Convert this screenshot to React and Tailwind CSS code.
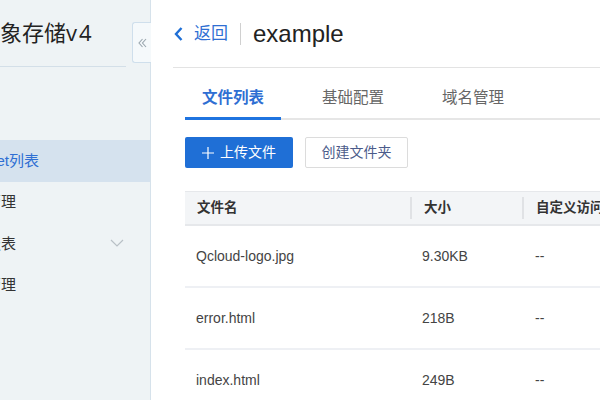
const font = { fontFamily: '"Liberation Sans", "Noto Sans CJK SC", sans-serif' };

const menu = [
  { label: "Bucket列表", active: true },
  { label: "密钥管理" },
  { label: "监控报表", caret: true },
  { label: "权限管理" },
];

const rows = [
  { name: "Qcloud-logo.jpg", size: "9.30KB" },
  { name: "error.html", size: "218B" },
  { name: "index.html", size: "249B" },
];

const Sidebar = () => (
  <div className="relative w-[151px] shrink-0 h-full">
    <div className="w-[150px] h-full bg-[#eef3f5] border-r border-[#d6e2eb] overflow-hidden box-content">
      <div className="h-[67px] flex items-center border-b border-[#d3dfe8] w-[126px]">
        <span className="ml-[-22px] whitespace-nowrap text-[22px] text-[#222]">
          对象存储<span className="tracking-[2px]" style={{ fontFamily: '"Open Sans", sans-serif' }}>v4</span>
        </span>
      </div>
      <div className="mt-[73px]">
        {menu.map((m) => (
          <div
            key={m.label}
            className={`h-[41.5px] flex items-center relative ${m.active ? "bg-[#d5e2ee]" : ""}`}
          >
            <div className={`flex justify-end whitespace-nowrap ${m.active ? "w-[39px]" : "w-[16px]"}`}>
              <span className={`text-[15px] ${m.active ? "text-[#2f6fd3]" : "text-[#333]"}`}>
                {m.label}
              </span>
            </div>
            {m.caret && (
              <svg className="absolute left-[110px] top-[16px]" width="14" height="8" viewBox="0 0 14 8">
                <path d="M1 1 L7 7 L13 1" fill="none" stroke="#b8c0c6" strokeWidth="1.2" />
              </svg>
            )}
          </div>
        ))}
      </div>
    </div>
    <div className="absolute left-[132px] top-[22px] w-[19px] h-[41px] bg-[#f5f9fb] border border-r-0 border-[#cfdfec] rounded-l-[3px] flex items-center justify-center">
      <svg width="9" height="10" viewBox="0 0 9 10">
        <path d="M4.5 1 L1 5 L4.5 9 M8 1 L4.5 5 L8 9" fill="none" stroke="#9aa6ae" strokeWidth="1.1" />
      </svg>
    </div>
  </div>
);

export default function App() {
  return (
    <div className="w-[600px] h-[400px] flex bg-white overflow-hidden" style={font}>
      <Sidebar />
      <div className="flex-1 pl-[22px] min-w-0">
        <div className="h-[68px] border-b border-[#e3e3e3] flex items-center">
          <svg className="ml-[1px]" width="9" height="14" viewBox="0 0 9 14">
            <path d="M7.5 1 L2 7 L7.5 13" fill="none" stroke="#1f6fd6" strokeWidth="2.4" />
          </svg>
          <span className="ml-[11px] text-[17px] text-[#2f6fd3]">返回</span>
          <span className="ml-[12px] w-px h-[22px] bg-[#d0d0d0]" />
          <span className="ml-[12px] text-[24px] text-[#222]">example</span>
        </div>
        <div className="ml-[12px]">
          <div className="mt-[9px] flex gap-[24px] border-b-2 border-[#e6e6e6]">
            {["文件列表", "基础配置", "域名管理"].map((t, i) => (
              <div key={t} className="relative h-[41px] px-[17px] flex items-center">
                <span className={`text-[15.5px] ${i === 0 ? "text-[#2f6fd3] font-bold" : "text-[#666]"}`}>
                  {t}
                </span>
                {i === 0 && (
                  <span className="absolute left-0 right-0 bottom-[-2px] h-[3px] bg-[#1f74e0]" />
                )}
              </div>
            ))}
          </div>
          <div className="mt-[17px] flex gap-[12px]">
            <button className="w-[108px] h-[31px] bg-[#1f6fd6] rounded-[2px] text-white text-[14px] flex items-center justify-center gap-[6px]">
              <svg width="12" height="12" viewBox="0 0 12 12">
                <path d="M6 0 V12 M0 6 H12" stroke="#fff" strokeWidth="1.2" />
              </svg>
              上传文件
            </button>
            <button className="w-[103px] h-[31px] bg-white border border-[#dcdcdc] rounded-[2px] text-[#4b5b8a] text-[14px]">
              创建文件夹
            </button>
          </div>
          <div className="mt-[23px]">
            <div className="h-[35px] bg-[#f3f5f7] border-t border-[#e6e8eb] border-b-2 border-b-[#e6e8eb] flex items-center text-[13.5px] font-bold text-[#333]">
              <div className="w-[225px] shrink-0 pl-[12px]">文件名</div>
              <div className="w-[112px] shrink-0 pl-[12px] border-l-2 border-[#e0e2e5] h-[22px] flex items-center">大小</div>
              <div className="flex-1 min-w-0 overflow-hidden pl-[12px] border-l-2 border-[#e0e2e5] h-[22px] flex items-center whitespace-nowrap">自定义访问域名</div>
            </div>
            {rows.map((r) => (
              <div key={r.name} className="h-[62px] border-b-2 border-[#eef0f4] flex items-center text-[14px] text-[#444]">
                <div className="w-[225px] shrink-0 pl-[11px]">{r.name}</div>
                <div className="w-[112px] shrink-0 pl-[12px]">{r.size}</div>
                <div className="flex-1 min-w-0 pl-[13px]">--</div>
              </div>
            ))}
          </div>
        </div>
      </div>
    </div>
  );
}
